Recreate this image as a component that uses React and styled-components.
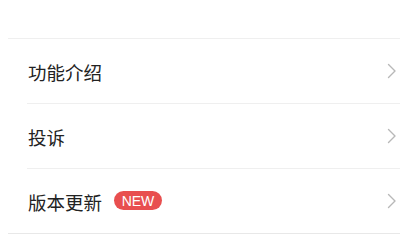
import React from "react"
import { styled, createGlobalStyle } from "styled-components"

const GlobalStyle = createGlobalStyle`
  body {
    margin: 0;
    background: #fff;
    font-family: "Noto Sans CJK SC", "Noto Sans", sans-serif;
  }
`

const items = [
  { title: "功能介绍" },
  { title: "投诉" },
  { title: "版本更新", badge: "NEW" },
]

function Chevron() {
  return (
    <svg width="10" height="16" viewBox="0 0 10 16" fill="none">
      <path d="M1.5 1.5 L8 8 L1.5 14.5" stroke="#b8b8b8" strokeWidth="1.4" strokeLinecap="round" strokeLinejoin="round" />
    </svg>
  )
}

export default function App() {
  return (
    <>
      <GlobalStyle />
      <Page>
        <List>
          {items.map((item) => (
            <Row key={item.title}>
              <Label>
                {item.title}
                {item.badge && <Badge>{item.badge}</Badge>}
              </Label>
              <Chevron />
            </Row>
          ))}
        </List>
      </Page>
    </>
  )
}

const Page = styled.div`
  width: 400px;
  height: 240px;
  padding: 38px 0 0 8px;
  box-sizing: border-box;
  overflow: hidden;
`

const List = styled.ul`
  margin: 0;
  padding: 0 0 0 19px;
  list-style: none;
  border-top: 1px solid #efefef;
  border-bottom: 1px solid #e8e8e8;
`

const Row = styled.li`
  display: flex;
  align-items: center;
  justify-content: space-between;
  height: 64px;
  padding: 0 3px 0 1px;
  border-bottom: 1px solid #efefef;

  &:last-child {
    border-bottom: none;
  }
`

const Label = styled.span`
  display: flex;
  align-items: center;
  gap: 12px;
  font-size: 18.5px;
  color: #222;
  line-height: 1;
  padding-top: 2px;
`

const Badge = styled.span`
  display: inline-flex;
  align-items: center;
  justify-content: center;
  width: 48px;
  height: 19px;
  border-radius: 10px;
  background: #e84f4f;
  color: #fff;
  font-family: "Liberation Sans", Arial, sans-serif;
  font-size: 14px;
  margin-top: -3px;
`
